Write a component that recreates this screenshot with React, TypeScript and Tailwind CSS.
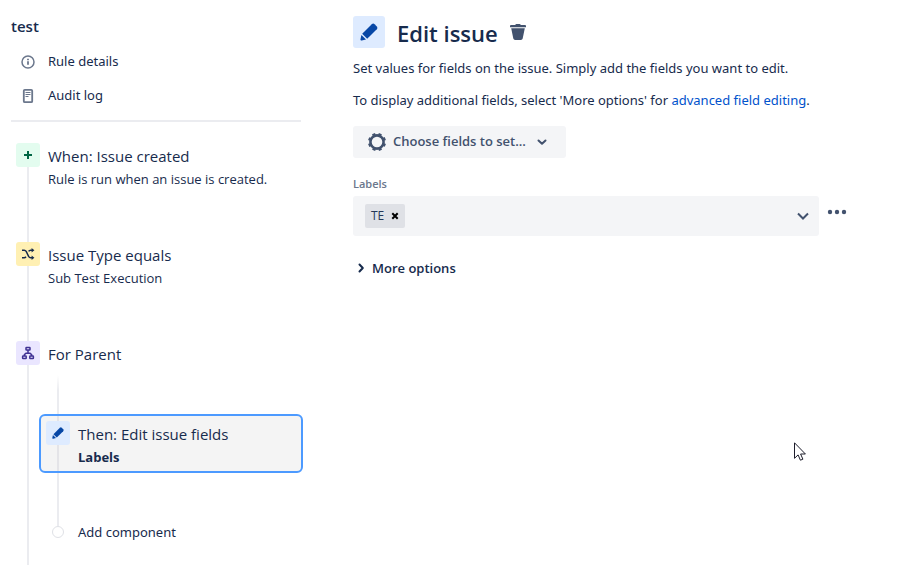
import {clsx} from 'clsx';
import {useState} from 'react';

import type {FC, ReactNode} from 'react';

interface IconProps {
  readonly className?: string;
}

const PencilIcon: FC<IconProps> = ({className}) => (
  <svg viewBox="0 0 24 24" fill="currentColor" aria-hidden="true" className={className}>
    <path d="M14.8 4.2a2 2 0 0 1 2.8 0l2.2 2.2a2 2 0 0 1 0 2.8L10.2 18.8l-5-5z" />
    <path d="M4.4 15l4.6 4.6-4.2.9a1 1 0 0 1-1.3-1.3z" />
  </svg>
);

const TrashIcon: FC<IconProps> = ({className}) => (
  <svg viewBox="0 0 24 24" fill="currentColor" aria-hidden="true" className={className}>
    <path d="M5 5h4.2l.5-.7a1 1 0 0 1 .8-.3h3a1 1 0 0 1 .8.3l.5.7H19a1 1 0 0 1 1 1v1.2H4V6a1 1 0 0 1 1-1z" />
    <path d="M5.2 8.2h13.6l-2.1 10.4a1.9 1.9 0 0 1-1.9 1.4H9.2a1.9 1.9 0 0 1-1.9-1.4z" />
  </svg>
);

const GearIcon: FC<IconProps> = ({className}) => (
  <svg viewBox="0 0 24 24" fill="none" stroke="currentColor" aria-hidden="true" className={className}>
    <circle cx="12" cy="12" r="6.6" strokeWidth="2.6" />
    <g strokeWidth="3.2" strokeLinejoin="round">
      {[22, 67, 112, 157, 202, 247, 292, 337].map((angle) => (
        <path key={angle} d="M12 6V3" transform={`rotate(${angle} 12 12)`} />
      ))}
    </g>
  </svg>
);

const InfoIcon: FC<IconProps> = ({className}) => (
  <svg viewBox="0 0 16 16" fill="none" stroke="currentColor" aria-hidden="true" className={className}>
    <circle cx="8" cy="8" r="6" strokeWidth="1.5" />
    <path d="M8 7.2v3.6" strokeWidth="1.8" />
    <path d="M8 4.8v1.4" strokeWidth="1.8" />
  </svg>
);

const LogIcon: FC<IconProps> = ({className}) => (
  <svg viewBox="0 0 16 16" fill="none" stroke="currentColor" aria-hidden="true" className={className}>
    <rect x="3.8" y="1.8" width="8.4" height="12.4" rx="1" strokeWidth="1.8" />
    <path d="M5.5 4.5h5M5.5 6.5h5M5.5 8.5h3" strokeWidth="1" />
  </svg>
);

const PlusIcon: FC<IconProps> = ({className}) => (
  <svg viewBox="0 0 16 16" fill="none" stroke="currentColor" aria-hidden="true" className={className}>
    <path d="M8 4v8M4 8h8" strokeWidth="2" />
  </svg>
);

const ShuffleIcon: FC<IconProps> = ({className}) => (
  <svg viewBox="0 0 16 16" fill="none" stroke="currentColor" aria-hidden="true" className={className}>
    <path d="M2 4.2h2.2c1 0 1.5.4 2 1.2l2.4 5c.5.9 1 1.3 2 1.3h2" strokeWidth="1.5" />
    <path d="M2 11.7h2.2c.8 0 1.3-.3 1.8-1M8.6 5.4c.5-.8 1-1.2 2-1.2h2" strokeWidth="1.5" />
    <path d="M11.6 2l2.8 2.2-2.8 2.2zM11.6 9.5l2.8 2.2-2.8 2.2z" fill="currentColor" stroke="none" />
  </svg>
);

const BranchIcon: FC<IconProps> = ({className}) => (
  <svg viewBox="0 0 16 16" fill="none" stroke="currentColor" strokeWidth="1.5" aria-hidden="true" className={className}>
    <rect x="6" y="2.6" width="4" height="2.4" rx="0.5" />
    <rect x="2.6" y="11" width="3.6" height="2.4" rx="0.5" />
    <rect x="9.8" y="11" width="3.6" height="2.4" rx="0.5" />
    <path d="M8 5v3M4.4 11V9.6L6 8.2h4l1.6 1.4V11" />
  </svg>
);

const ChevronIcon: FC<IconProps> = ({className}) => (
  <svg viewBox="0 0 16 16" fill="none" stroke="currentColor" strokeWidth="2" aria-hidden="true" className={className}>
    <path d="M4.5 6.5L8 9.8l3.5-3.3" strokeLinecap="round" strokeLinejoin="round" />
  </svg>
);

interface StepProps {
  readonly children?: ReactNode;
  readonly icon: FC<IconProps>;
  readonly last?: boolean;
  readonly subtitle?: string;
  readonly tone: string;
  readonly title: string;
}

const Step: FC<StepProps> = ({children, icon: Icon, last, subtitle, title, tone}) => (
  <li className={clsx('flex gap-2', last ? 'grow' : 'min-h-[99px]')}>
    <div className="flex w-6 shrink-0 flex-col items-center">
      <span className={clsx('flex size-6 shrink-0 items-center justify-center rounded-[3px]', tone)}>
        <Icon className="size-4" />
      </span>
      <span className="w-0.5 grow bg-[#ebecf0]" />
    </div>
    <div className="min-w-0 grow">
      <button type="button" className="block pt-px text-left">
        <span className="block text-[15px] leading-6">{title}</span>
        {subtitle && <span className="block pt-px text-[13px] leading-5">{subtitle}</span>}
      </button>
      {children}
    </div>
  </li>
);

const Sidebar: FC = () => (
  <aside className="flex w-[303px] shrink-0 flex-col pl-[11px]">
    <h2 className="pt-3.5 text-[15px] leading-6 font-semibold">test</h2>
    <nav className="mr-0.5 border-b-2 border-[#ebecf0] pt-[7px] pb-[7px] font-['Noto_Sans',sans-serif]">
      <button type="button" className="flex h-[34px] items-center gap-3 pl-[9px] text-[13px]">
        <InfoIcon className="size-4 text-[#6b778c]" />
        Rule details
      </button>
      <button type="button" className="flex h-[34px] items-center gap-3 pl-[9px] text-[13px]">
        <LogIcon className="size-4 text-[#6b778c]" />
        Audit log
      </button>
    </nav>

    <ol className="flex grow flex-col pt-[21px] pl-[5px]">
      <Step
        icon={PlusIcon}
        title="When: Issue created"
        subtitle="Rule is run when an issue is created."
        tone="bg-[#e3fcef] text-[#006644]"
      />
      <Step
        icon={ShuffleIcon}
        title="Issue Type equals"
        subtitle="Sub Test Execution"
        tone="bg-[#fff0b3] text-[#172b4d]"
      />
      <Step icon={BranchIcon} title="For Parent" tone="bg-[#eae6ff] text-[#403294]" last>
        {/* Nested branch */}
        <div className="-ml-[9px] flex flex-col pt-[9px]">
          <span className="ml-[18px] h-[39px] w-0.5 bg-linear-to-b from-transparent to-[#ebecf0] to-40%" />
          <button
            type="button"
            className="flex h-[59px] gap-2 rounded-md border-2 border-[#4c9aff] bg-[#f4f4f4] px-[5px] text-left"
          >
            <span className="flex w-6 shrink-0 flex-col items-center self-stretch">
              <span className="h-[5px] w-0.5 bg-[#e4e4e8]" />
              <span className="flex size-6 shrink-0 items-center justify-center rounded-[3px] bg-[#deebff] text-[#0747a6]">
                <PencilIcon className="size-4" />
              </span>
              <span className="w-0.5 grow bg-[#e4e4e8]" />
            </span>
            <span className="pt-1.5">
              <span className="block text-[15px] leading-6">Then: Edit issue fields</span>
              <span className="block pt-px text-[13px] leading-5 font-bold">Labels</span>
            </span>
          </button>
          <span className="ml-[18px] h-[53px] w-0.5 bg-[#ebecf0]" />
          <button type="button" className="-mt-1 flex items-center gap-3.5 pl-[13px] font-['Noto_Sans',sans-serif] text-[13px] leading-5">
            <span className="size-3 rounded-full border border-[#dfe1e6] bg-white" />
            Add component
          </button>
        </div>
      </Step>
    </ol>
  </aside>
);

const LabelsField: FC = () => {
  const [labels, setLabels] = useState(['TE']);

  return (
    <div className="pt-[18px]">
      <label htmlFor="labels" className="block text-[11px] leading-4 font-semibold text-[#6b778c]">Labels</label>
      <div className="mt-1 flex gap-2">
        <div className="flex h-10 min-w-0 grow items-center rounded-[3px] bg-[#f4f5f7] pr-2 pl-3">
          {labels.map((label) => (
            <span key={label} className="flex h-6 items-center rounded-[2px] bg-[#dfe1e6] pl-1.5 text-xs text-[#253858]">
              {label}
              <button
                type="button"
                aria-label={`Remove ${label}`}
                onClick={() => setLabels(labels.filter((item) => item !== label))}
                className="flex h-6 w-[21px] items-center justify-center text-black"
              >
                <svg viewBox="0 0 8 8" stroke="currentColor" strokeWidth="2" aria-hidden="true" className="size-2">
                  <path d="M1.3 1.3l5.4 5.4M6.7 1.3L1.3 6.7" />
                </svg>
              </button>
            </span>
          ))}
          <input id="labels" type="text" className="min-w-0 grow bg-transparent px-1 text-sm outline-hidden" />
          <button type="button" aria-label="Show labels" className="text-[#42526e]">
            <svg viewBox="0 0 16 16" fill="none" stroke="currentColor" strokeWidth="2" aria-hidden="true" className="size-4">
              <path d="M3 5.5l5 5 5-5" />
            </svg>
          </button>
        </div>
        <button type="button" aria-label="Field options" className="flex h-8 w-5 items-center justify-center text-[#42526e]">
          <svg viewBox="0 0 20 8" fill="currentColor" aria-hidden="true" className="h-2 w-5">
            <circle cx="3" cy="4" r="2.2" />
            <circle cx="10" cy="4" r="2.2" />
            <circle cx="17" cy="4" r="2.2" />
          </svg>
        </button>
      </div>
    </div>
  );
};

const EditIssue: FC = () => (
  <main className="min-w-0 grow pt-4 pr-[51px] pl-[50px]">
    <header className="flex h-8 items-center">
      <span className="flex size-8 items-center justify-center rounded-[3px] bg-[#deebff] text-[#0747a6]">
        <PencilIcon className="size-6" />
      </span>
      <h1 className="pt-0.5 pl-3 text-[22px] leading-7 font-semibold">Edit issue</h1>
      <button type="button" aria-label="Delete component" className="pl-2 text-[#42526e]">
        <TrashIcon className="size-6" />
      </button>
    </header>
    <div className="font-['Noto_Sans',sans-serif] text-[13px] leading-5">
      <p className="pt-2.5">
        Set values for fields on the issue. Simply add the fields you want to edit.
      </p>
      <p className="pt-3">
        To display additional fields, select &apos;More options&apos; for{' '}
        <a href="#" className="text-[#0052cc] hover:underline">advanced field editing</a>.
      </p>
    </div>

    <button
      type="button"
      className="mt-4 flex h-8 items-center rounded-[3px] bg-[#f4f5f7] pr-4 pl-3 text-[13px] font-semibold text-[#42526e]"
    >
      <GearIcon className="mr-1 size-6" />
      Choose fields to set...
      <ChevronIcon className="ml-2 size-4" />
    </button>

    <LabelsField />

    <button type="button" className="mt-[22px] flex items-center text-[13px] leading-5 font-semibold">
      <ChevronIcon className="mr-[3px] size-4 -rotate-90" />
      More options
    </button>
  </main>
);

const App: FC = () => (
  <div className="flex min-h-screen bg-white font-['Open_Sans','Noto_Sans',sans-serif] text-[#172b4d]">
    <Sidebar />
    <EditIssue />

    {/* Mouse pointer */}
    <svg viewBox="0 0 12 19" aria-hidden="true" className="pointer-events-none absolute top-[442px] left-[794px] h-[19px] w-3">
      <path
        d="M.5.8v15.5l3.6-3.4 2.3 5.3 2.5-1-2.3-5.2h4.8z"
        fill="white"
        stroke="#1c1c2b"
      />
    </svg>
  </div>
);

export default App;
